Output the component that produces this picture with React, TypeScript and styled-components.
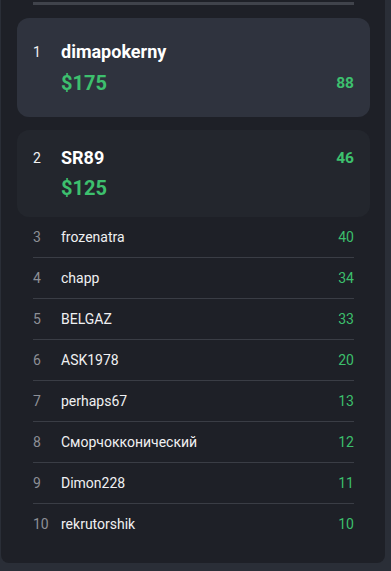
import React from "react";
import styled, { createGlobalStyle } from "styled-components";

const Global = createGlobalStyle`
  html, body { margin: 0; padding: 0; background: #2a2e37; }
  body { font-family: Roboto, "Noto Sans", "Liberation Sans", sans-serif; -webkit-font-smoothing: antialiased; }
`;

const Panel = styled.div`
  width: 384px;
  margin-left: 1px;
  height: 563px;
  box-sizing: border-box;
  background: #1e2027;
  border-radius: 0 0 8px 8px;
  padding: 2px 15px 0 16px;
  display: flex;
  flex-direction: column;
`;

const TopRule = styled.div`
  height: 3px;
  margin: 0 16px 13px 16px;
  background: #40434b;
`;

const Card = styled.div<{ $top?: boolean }>`
  border-radius: 12px;
  background: ${(p) => (p.$top ? "#2f333e" : "#23262d")};
  padding: ${(p) => (p.$top ? "23px 16px 21px 16px" : "17px 16px 16px 16px")};
  margin-bottom: ${(p) => (p.$top ? "13px" : "0")};
  display: grid;
  grid-template-columns: 28px 1fr auto;
  grid-template-rows: 22px 26px;
  row-gap: ${(p) => (p.$top ? "7px" : "6px")};
  align-items: center;
`;

const CardRank = styled.span`
  color: #f2f2f2;
  font-size: 14px;
  grid-row: 1;
  grid-column: 1;
`;

const CardName = styled.span`
  color: #ffffff;
  font-size: 18px;
  font-weight: 700;
  line-height: 22px;
  grid-row: 1;
  grid-column: 2;
`;

const Prize = styled.span`
  color: #3dc06e;
  font-size: 20px;
  font-weight: 700;
  line-height: 26px;
  grid-row: 2;
  grid-column: 2;
`;

const CardScore = styled.span<{ $row: number }>`
  color: #3dc06e;
  font-size: 15.5px;
  font-weight: 700;
  grid-row: ${(p) => p.$row};
  grid-column: 3;
  text-align: right;
`;

const List = styled.div`
  display: flex;
  flex-direction: column;
  margin: 0 16px;
`;

const Row = styled.div`
  height: 40px;
  display: grid;
  grid-template-columns: 28px 1fr auto;
  align-items: center;
  font-size: 14px;
  & + & {
    border-top: 1px solid #3a3d45;
  }
`;

const Rank = styled.span`
  color: #8d8f96;
`;

const Name = styled.span`
  color: #f0f0f2;
`;

const Score = styled.span`
  color: #3cbf6c;
  text-align: right;
`;

const top = [
  { rank: 1, name: "dimapokerny", prize: "$175", score: 88, scoreRow: 2 },
  { rank: 2, name: "SR89", prize: "$125", score: 46, scoreRow: 1 },
];

const rows = [
  { rank: 3, name: "frozenatra", score: 40 },
  { rank: 4, name: "chapp", score: 34 },
  { rank: 5, name: "BELGAZ", score: 33 },
  { rank: 6, name: "ASK1978", score: 20 },
  { rank: 7, name: "perhaps67", score: 13 },
  { rank: 8, name: "Сморчокконический", score: 12 },
  { rank: 9, name: "Dimon228", score: 11 },
  { rank: 10, name: "rekrutorshik", score: 10 },
];

export default function App() {
  return (
    <>
      <Global />
      <Panel>
        <TopRule />
        {top.map((t) => (
          <Card key={t.rank} $top={t.rank === 1}>
            <CardRank>{t.rank}</CardRank>
            <CardName>{t.name}</CardName>
            <Prize>{t.prize}</Prize>
            <CardScore $row={t.scoreRow}>{t.score}</CardScore>
          </Card>
        ))}
        <List>
          {rows.map((r) => (
            <Row key={r.rank}>
              <Rank>{r.rank}</Rank>
              <Name>{r.name}</Name>
              <Score>{r.score}</Score>
            </Row>
          ))}
        </List>
      </Panel>
    </>
  );
}
